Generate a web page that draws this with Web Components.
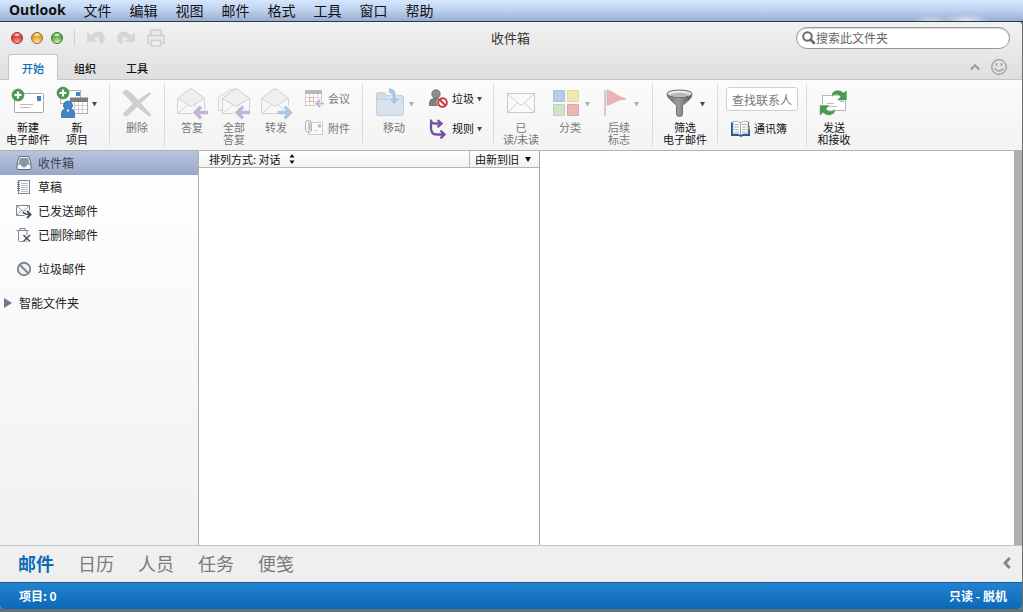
<!DOCTYPE html>
<html lang="zh-CN">
<head>
<meta charset="utf-8">
<title>Outlook</title>
<style>
  html { height: 100%; }
  body {
    margin: 0; min-height: 100vh; display: flex; flex-direction: column;
    font: 12px/16px "Noto Sans CJK SC", sans-serif; color: #1c1c1c;
    background: #66716f;
  }
  mail-window { flex: 1; }
</style>
</head>
<body>
<menu-bar>
  <menu-item strong>Outlook</menu-item>
  <menu-item>文件</menu-item><menu-item>编辑</menu-item><menu-item>视图</menu-item>
  <menu-item>邮件</menu-item><menu-item>格式</menu-item><menu-item>工具</menu-item>
  <menu-item>窗口</menu-item><menu-item>帮助</menu-item>
</menu-bar>
<mail-window>
  <title-bar slot="title">收件箱</title-bar>
  <tab-strip slot="tabs">
    <ribbon-tab selected>开始</ribbon-tab><ribbon-tab>组织</ribbon-tab><ribbon-tab>工具</ribbon-tab>
  </tab-strip>
  <ribbon-bar slot="ribbon">
    <ribbon-group style="--start:7px;--end:11px;--gap:7px">
      <ribbon-button icon="newMail">新建<br>电子邮件</ribbon-button>
      <ribbon-button icon="newItem" menu>新<br>项目</ribbon-button>
    </ribbon-group>
    <ribbon-group>
      <ribbon-button icon="remove" disabled>删除</ribbon-button>
    </ribbon-group>
    <ribbon-group style="--end:12px">
      <ribbon-button icon="reply" disabled>答复</ribbon-button>
      <ribbon-button icon="replyAll" disabled>全部<br>答复</ribbon-button>
      <ribbon-button icon="forward" disabled>转发</ribbon-button>
      <ribbon-stack style="--before:8px">
        <ribbon-button small icon="meeting" disabled>会议</ribbon-button>
        <ribbon-button small icon="attach" disabled>附件</ribbon-button>
      </ribbon-stack>
    </ribbon-group>
    <ribbon-group style="--start:10px;--end:11px">
      <ribbon-button icon="move" menu disabled>移动</ribbon-button>
      <ribbon-stack style="--before:14px">
        <ribbon-button small icon="junk" menu>垃圾</ribbon-button>
        <ribbon-button small icon="rules" menu>规则</ribbon-button>
      </ribbon-stack>
    </ribbon-group>
    <ribbon-group style="--end:12px;--gap:7px">
      <ribbon-button icon="readState" disabled>已<br>读/未读</ribbon-button>
      <ribbon-button icon="categories" menu disabled>分类</ribbon-button>
      <ribbon-button icon="flag" menu disabled>后续<br>标志</ribbon-button>
    </ribbon-group>
    <ribbon-group style="--start:11px;--end:11px">
      <ribbon-button icon="filter" menu>筛选<br>电子邮件</ribbon-button>
    </ribbon-group>
    <ribbon-group style="--start:8px;--end:8px">
      <ribbon-stack>
        <contact-finder></contact-finder>
        <ribbon-button small inset icon="addressBook">通讯簿</ribbon-button>
      </ribbon-stack>
    </ribbon-group>
    <ribbon-group last>
      <ribbon-button icon="sendReceive">发送<br>和接收</ribbon-button>
    </ribbon-group>
  </ribbon-bar>
  <folder-list slot="folders">
    <folder-item icon="inbox" selected>收件箱</folder-item>
    <folder-item icon="drafts">草稿</folder-item>
    <folder-item icon="sent">已发送邮件</folder-item>
    <folder-item icon="trash">已删除邮件</folder-item>
    <folder-item icon="blocked" apart>垃圾邮件</folder-item>
    <folder-item parent apart>智能文件夹</folder-item>
  </folder-list>
  <message-list slot="messages">
    <span slot="arrange">排列方式: 对话</span>
    <span slot="order">由新到旧</span>
  </message-list>
  <reading-pane slot="reading"></reading-pane>
  <view-switcher slot="views">
    <view-link selected>邮件</view-link><view-link>日历</view-link><view-link>人员</view-link>
    <view-link>任务</view-link><view-link>便笺</view-link>
  </view-switcher>
  <status-bar slot="status">
    <span>项目: 0</span><span slot="end">只读 - 脱机</span>
  </status-bar>
</mail-window>

<script>
const badge = (x, y) => `<circle cx="${x}" cy="${y}" r="6" fill="#4a9a50" stroke="#397f40" stroke-width=".6"/><path d="M${x-3.5} ${y}h7M${x} ${y-3.5}v7" stroke="#fff" stroke-width="2.2"/>`;
const openEnvelope = (x) => `<g transform="translate(${x} 0)" stroke="#d3d3d3" fill="#f8f8f8" stroke-linejoin="round"><path d="M1.5 10.5 13 1.6q2-1.2 4 0l11.500 8.900V25.500h-27z"/><path d="M1.500 10.500 13 1.600q2-1.200 4 0l11.500 8.900L15 18.500z" fill="#efefef"/><path d="M1.500 25.500 12 16.700M28.500 25.500 18 16.700" fill="none"/></g>`;
const arrowLeft = `<path d="M29.500 24.500H19M24.500 18.500l-6 6 6 6" fill="none" stroke="#f6f6f6" stroke-width="5.500"/><path d="M32 24.500H19.500M25 18.700l-5.800 5.800 5.800 5.800" fill="none" stroke="#c3b2d6" stroke-width="3.300"/>`;
const arrowRight = `<path d="M18 24.500h12M25 18.500l6 6-6 6" fill="none" stroke="#f6f6f6" stroke-width="5.500"/><path d="M17.500 24.500H30M24.500 18.700l5.800 5.800-5.800 5.800" fill="none" stroke="#adc5e3" stroke-width="3.300"/>`;
const ICONS = {
  newMail: [32, 32, `<rect x="2.500" y="5.500" width="29" height="19" rx=".8" fill="#fff" stroke="#a8a8a8"/><path d="M25 8h4v5h-4z" fill="#3d85c8"/><path d="M8 16.500h13M8 19.500h10" stroke="#b9b9b9"/>` + badge(6, 7)],
  newItem: [32, 32, `<rect x="3.500" y="2.500" width="20" height="13" fill="#fff" stroke="#b0b0b0"/><path d="M19 4h4v4h-4z" fill="#3d85c8"/><rect x="13.500" y="10.500" width="17" height="15" fill="#fff" stroke="#b0b0b0"/><path d="M13 9.500h18V14H13z" fill="#7c7c7c"/><path d="M17.500 14v11M21.500 14v11M25.500 14v11M14 17.500h16M14 21.500h16" stroke="#cfcfcf"/><g fill="#3f83c9" stroke="#2a66a6" stroke-width=".7"><path d="M4.500 29.500v-4q0-4.500 5-4.500h3q5 0 5 4.500v4z"/><circle cx="11" cy="17.500" r="4.500"/></g><path d="M9.500 21.500h3L11 24.500z" fill="#fff"/>` + badge(6, 5)],
  remove: [32, 32, `<path d="M2.500 3.500Q5 .8 8.500 3.800L17 12.200 28 5q2.500-.8 1 1.500l-9.500 8.700 10 11.300q.5 2.500-2 1.200L16 18.500 6.500 27.800q-4 1-4-2.300L12.300 15.800 2.600 5.600z" fill="#cfcfcf" stroke="#bdbdbd" stroke-width=".5"/>`],
  reply: [32, 32, openEnvelope(0) + arrowLeft],
  replyAll: [32, 32, `<path d="M4 22.500H.5v-13L12 1.600h5" fill="#f6f6f6" stroke="#d3d3d3"/>` + openEnvelope(3) + arrowLeft],
  forward: [32, 32, openEnvelope(0) + arrowRight],
  meeting: [20, 20, `<rect x=".5" y="1.500" width="16" height="15" fill="#fff" stroke="#ccc"/><path d="M0 1h17v4H0z" fill="#b9b9b9"/><path d="M4.500 5v11M8.500 5v11M12.500 5v11M1 8.500h15M1 12.500h15" stroke="#d8d8d8"/><path d="M4.500 8.500h4v4h-4z" fill="none" stroke="#e2aca6"/><path d="M19 14.500h-7M15 11l-3.700 3.500L15 18" fill="none" stroke="#f6f6f6" stroke-width="4"/><path d="M19 14.500h-7M15 11l-3.700 3.500L15 18" fill="none" stroke="#c3b2d6" stroke-width="2"/>`],
  attach: [20, 20, `<rect x="3.500" y="3.500" width="14" height="12" fill="#fafafa" stroke="#ccc"/><path d="M13 5.500h3v3h-3z" fill="#9fbfe0"/><path d="M9 11.500h3" stroke="#ccc"/><path d="M4.500 4.500v6q.5 1.500 1.500 0v-7Q5.500 1 3 1.200.6 1.500.5 4v7q.3 2.500 3 2.700 2.600-.2 3-2.700V5" fill="none" stroke="#b2b2b2"/>`],
  move: [32, 32, `<path d="M2.500 6.500q0-2 2-2h6l2 3h15q2 0 2 2V14h-27z" fill="#d0dde7" stroke="#c0cfda"/><path d="M2.500 11.500h27v15q0 1-1 1h-25q-1 0-1-1z" fill="#d6e3ed" stroke="#c3d1dc"/><path d="M14.500 0q8-.5 8 10h4.500l-6.700 7-6.800-7h4.500q0-5-3.500-5z" fill="#a9c5e2" stroke="#f3f6f9" stroke-width=".8"/>`],
  junk: [20, 20, `<path d="M.5 16.500V14q0-4 4-4.500h5q4 .5 4 4.500v2.500z" fill="#838383" stroke="#626262" stroke-width=".8"/><circle cx="7" cy="5" r="4.200" fill="#8f8f8f" stroke="#626262" stroke-width=".8"/><circle cx="13.500" cy="13.500" r="5.800" fill="#f5f5f5"/><circle cx="13.500" cy="13.500" r="4.300" fill="#fff" stroke="#bf3a38" stroke-width="1.900"/><path d="m10.500 10.500 6 6" stroke="#bf3a38" stroke-width="1.900"/>`],
  rules: [20, 20, `<path d="M2 .5q0 4 3.500 4H11M2 3v6q0 6.500 5.500 6.500H14" fill="none" stroke="#764fa0" stroke-width="2.300"/><path d="m8.500 1 4 3.500-4 3.700M11.500 11.500l4 4-4 3.800" fill="none" stroke="#764fa0" stroke-width="2.300"/>`],
  readState: [32, 32, `<rect x="2.500" y="5.500" width="27" height="19" fill="#fafafa" stroke="#c9c9c9"/><path d="m2.500 5.500 12 11q1.500 1 3 0l12-11M2.500 24.500l10-9.500M29.500 24.500l-10-9.500" fill="none" stroke="#cdcdcd"/>`],
  categories: [32, 32, `<g stroke-width="1"><path d="M3.500 2.500h11v11h-11z" fill="#b5cde9" stroke="#a5bfdc"/><path d="M17.500 2.500h11v11h-11z" fill="#f5e5b3" stroke="#e5d5a2"/><path d="M3.500 16.500h11v11h-11z" fill="#cfe1c9" stroke="#bdd2b6"/><path d="M17.500 16.500h11v11h-11z" fill="#ecb6b6" stroke="#dda5a5"/></g>`],
  flag: [32, 32, `<path d="M5 2h2v26H5z" fill="#cdcdcd"/><path d="M8 2q5 1 9 4.500 4 3 10 4.500-8 .5-12 3.500-3 2-7 2.500z" fill="#e9b5b5" stroke="#dfa4a4" stroke-width=".7"/>`],
  filter: [32, 32, `<defs><linearGradient id="steel"><stop stop-color="#727272"/><stop offset=".45" stop-color="#9a9a9a"/><stop offset="1" stop-color="#5d5d5d"/></linearGradient></defs><path d="M2 6q0 3 3 5.500l6.500 6V26q0 2.500 3 2.500t3-2.500v-8.500l7-6Q27 9 27 6z" fill="url(#steel)" stroke="#555" stroke-width=".7"/><ellipse cx="14.500" cy="5.700" rx="12.500" ry="3.700" fill="#e8e8e8" stroke="#666"/><path d="M3.500 7q11-4.500 22 0-11 4-22 0z" fill="#b9b9b9"/>`],
  addressBook: [20, 20, `<path d="M0 3.500h19V17h-7l-2 1-2-1H0z" fill="#1f5a94"/><path d="M18 4h1.500v3H18z" fill="#fff"/><path d="M17.500 7.500H19v3h-1.500z" fill="#e8b730"/><path d="M2 2.500q5-1 7.500 1.200V16Q7 14 2 15zM17 2.500q-5-1-7.500 1.200V16q2.500-2 7.500-1z" fill="#fff" stroke="#929ba3" stroke-width=".7"/><path d="M3.500 5.500H8M3.500 8H8M3.500 10.500H8M3.500 13H8M11 5.500h4.500M11 8h4.500M11 10.500h4.500M11 13h4.500" stroke="#a9a9a9" stroke-width=".9"/>`],
  sendReceive: [32, 32, `<rect x="4.500" y="7.500" width="23" height="15" fill="#fff" stroke="#b5b5b5"/><path d="M22 10h4v4h-4z" fill="#8eb9df"/><path d="M9 15.500h7M9 18.500h10" stroke="#bdbdbd"/><path d="M13.500 6.500q1-4 6-4.500 4 0 6 2.500L29 2v10.500H18.500l3.800-3.700q-1.500-2-4-2-2.500 0-4.300 2.200zM17.500 23q-1.500 4-6 4.500-4 .2-6.200-2.500L1.500 28V17H12l-3.500 4q1.500 2 4 2 2 0 4-2z" fill="#4b9a4c" stroke="#fff" stroke-width=".6"/>`],
  inbox: [16, 16, `<path d="M3 1.500h10l2 7v5q0 1-1 1H2q-1 0-1-1v-5z" fill="#f4f6fa" stroke="#5f6c80"/><path d="M4 3h8l1.500 5.500h-2.600q-.9 3-2.900 3t-2.900-3H2.500z" fill="#8b94a5"/><path d="M1 9h4q1 3 3 3t3-3h4" fill="none" stroke="#6e7a8d"/>`],
  drafts: [16, 16, `<rect x="2.500" y="1.500" width="11" height="13" fill="#fafbfc" stroke="#7d8794"/><path d="M5 4.500h7M5 6.500h7M5 8.500h7M5 10.500h7M5 12.500h7" stroke="#aab1ba" stroke-width=".8"/><path d="M1 3.500h3M1 5.500h3M1 7.500h3M1 9.500h3M1 11.500h3" stroke="#5f6975" stroke-width=".8"/>`],
  sent: [16, 16, `<path d="M.500 2.500h13v10H.5z" fill="#fff" stroke="#7d8794"/><path d="M.5 2.500 7 8.500l6.500-6M.5 12.500l4.700-5M13.500 12.500 9 7.500" fill="none" stroke="#8a939f"/><path d="M7 9q1 2.500 7 2.500M11 7.500l4 4-4 3.500" fill="none" stroke="#fff" stroke-width="3.500"/><path d="M7 9q1 2.500 7 2.500M11 7.800l3.700 3.700-3.700 3.500" fill="none" stroke="#47505c" stroke-width="1.800"/>`],
  trash: [16, 16, `<path d="M2.500 4v9.500q0 1 1 1H11V4" fill="#fbfbfb" stroke="#858d98"/><path d="M.500 3.500h12M4 3V1.500h5V3" fill="none" stroke="#858d98" stroke-width="1.200"/><path d="m7.500 8 6.500 6.500M14 8l-6.500 6.500" stroke="#fff" stroke-width="3.200"/><path d="m7.500 8 6.500 6.500M14 8l-6.500 6.500" stroke="#4d5661" stroke-width="1.700"/>`],
  blocked: [16, 16, `<circle cx="8" cy="8" r="6.200" fill="#f3f3f3" stroke="#7f8792" stroke-width="1.900"/><path d="m3.500 3.500 9 9" stroke="#7f8792" stroke-width="2"/>`],
  undo: [18, 16, `<path d="M0 2v10h10.500L7 8.700q2-2.200 4-1.500 2.700 1.300.8 4.300l2.500 3q3.700-3 3.500-7Q16.500 2 12 1.500 7.500 1.500 4 5.500z" fill="#d6d6d6"/>`],
  redo: [18, 16, `<path d="M18 2v10H7.500L11 8.700q-2-2.200-4-1.500-2.700 1.300-.8 4.300l-2.500 3Q0 11.500.2 7.500 1.500 2 6 1.500q4.500 0 8 4z" fill="#d6d6d6"/>`],
  print: [18, 18, `<g fill="#e9e9e9" stroke="#cfcfcf" stroke-width="1.400"><path d="M4 6V1h10v5"/><path d="M1 6.500h16v8H1z"/><path d="M4.500 11.500h9V17h-9z" fill="#f2f2f2"/></g>`],
  search: [14, 16, `<circle cx="5.500" cy="6.500" r="4.300" fill="none" stroke="#6a6a6a" stroke-width="2"/><path d="m8.500 9.500 3.500 3.500" stroke="#6a6a6a" stroke-width="2.500" stroke-linecap="round"/>`],
  collapse: [10, 8, `<path d="m.8 6.500 4.200-4.200 4.200 4.200" fill="none" stroke="#9d9d9d" stroke-width="2.200"/>`],
  smile: [18, 18, `<circle cx="9" cy="9" r="7.300" fill="none" stroke="#9d9d9d" stroke-width="1.300"/><path d="M6.500 5v3M11.500 5v3" stroke="#9d9d9d" stroke-width="1.500"/><path d="M4.500 10.500q4.500 5 9 0" fill="none" stroke="#9d9d9d" stroke-width="1.300"/>`],
  back: [8, 12, `<path d="M6.700 1 2 6l4.700 5" fill="none" stroke="#858585" stroke-width="2.800"/>`],
  down: [5, 5, `<path d="M0 0h5L2.500 4.500z" fill="currentColor"/>`],
  sortDown: [6, 5, `<path d="M0 0h6L3 5z" fill="currentColor"/>`],
  updown: [6, 10, `<path d="M.5 3.500h5L3 0zM.5 6.500h5L3 10z" fill="currentColor"/>`],
  right: [8, 10, `<path d="M0 0v10l8-5z" fill="#6b7a93"/>`]
};

const RESET = `
  button, a, input { font: inherit; color: inherit; line-height: inherit; }
  button { margin: 0; padding: 0; border: 0; background: none; cursor: default; text-align: inherit; }
  a { text-decoration: none; cursor: default; }`;

/** Registers an element whose shadow root is cloned from a template built from css and html. */
function define(name, css, html) {
  customElements.define(name, class extends HTMLElement {
    constructor() {
      super();
      this.attachShadow({ mode: 'open' });
    }
    connectedCallback() {
      if (this.shadowRoot.childNodes.length) return;
      const t = document.createElement('template');
      t.innerHTML = `<style>${RESET}${css}</style>${typeof html === 'function' ? html(this) : html}`;
      this.shadowRoot.append(t.content.cloneNode(true));
    }
  });
}

define('ui-icon', `:host { display: block; flex: none; } svg { display: block; overflow: visible; }`, el => {
  const [w, h, body] = ICONS[el.getAttribute('name')];
  return `<svg width="${w}" height="${h}" viewBox="0 0 ${w} ${h}" aria-hidden="true">${body}</svg>`;
});

define('menu-bar', `
  :host { display: block; border-bottom: 1px solid #26395c;
    background: radial-gradient(ellipse 24px 7px at calc(100% - 57px) 100%, #eef3f8cc, transparent), radial-gradient(ellipse 18px 6px at calc(100% - 92px) 100%, #e4ebf3aa, transparent), linear-gradient(#d6e6fc, #bed4f2 45%, #9cadca); }
  nav { box-sizing: border-box; display: flex; gap: 18px; padding: 0 9px 2px; height: 21px; align-items: center; }`,
  `<nav aria-label="菜单"><slot></slot></nav>`);

define('menu-item', `
  :host { display: block; font-size: 14px; line-height: 20px; color: #111; }
  :host([strong]) { font-family: "Noto Sans", sans-serif; font-weight: 700; }
  button { display: block; white-space: nowrap; }`,
  `<button type="button"><slot></slot></button>`);

define('mail-window', `
  :host { display: flex; flex-direction: column; margin: 0 1px 3px 0; background: #fff; border-radius: 0 4px 4px 4px; overflow: hidden; }
  header { background: linear-gradient(#f2f2f2, #dedede); }
  main { flex: 1; display: grid; grid-template-columns: 199px 341px 1fr; }`,
  `<header><slot name="title"></slot><slot name="tabs"></slot></header>
   <slot name="ribbon"></slot>
   <main><slot name="folders"></slot><slot name="messages"></slot><slot name="reading"></slot></main>
   <slot name="views"></slot><slot name="status"></slot>`);

define('title-bar', `
  :host { display: grid; grid-template-columns: 1fr auto 1fr; align-items: center; height: 32px; padding: 0 12px 0 11px; }
  h1 { margin: 0; font-size: 13px; line-height: 18px; font-weight: 400; color: #333; }
  .left { display: flex; align-items: center; }
  .lights { display: flex; gap: 8px; padding-right: 11px; margin-right: 12px; border-right: 1px solid #cfcfcf; height: 16px; align-items: center; }
  .lights button { width: 12px; height: 12px; border-radius: 50%; border: 1px solid var(--edge); background: radial-gradient(ellipse 4px 2px at 50% 18%, #fff, transparent), radial-gradient(circle at 50% 95%, var(--glow), var(--fill) 60%); }
  .tools { display: flex; gap: 12px; align-items: center; }
  .tools button { display: block; }
  .search { justify-self: end; box-sizing: border-box; width: 214px; height: 22px; display: flex; align-items: center; padding: 0 5px; background: #fff; border: 1px solid #989898; border-radius: 11px; box-shadow: inset 0 1px 1px #00000026; }
  input { flex: 1; min-width: 0; padding: 0; border: 0; outline: 0; background: none; line-height: 18px; }
  input::placeholder { color: #666; opacity: 1; }`,
  `<div class="left">
     <div class="lights">
       <button type="button" aria-label="关闭" style="--edge:#96302f;--fill:#dc3d3d;--glow:#ffa59c"></button>
       <button type="button" aria-label="最小化" style="--edge:#9c6c28;--fill:#e69b2c;--glow:#ffee9e"></button>
       <button type="button" aria-label="缩放" style="--edge:#437336;--fill:#5fa84c;--glow:#d3f5b4"></button>
     </div>
     <div class="tools">
       <button type="button" aria-label="撤消" disabled><ui-icon name="undo"></ui-icon></button>
       <button type="button" aria-label="重做" disabled><ui-icon name="redo"></ui-icon></button>
       <button type="button" aria-label="打印" disabled><ui-icon name="print"></ui-icon></button>
     </div>
   </div>
   <h1><slot></slot></h1>
   <label class="search"><ui-icon name="search"></ui-icon><input type="search" aria-label="搜索" placeholder="搜索此文件夹"></label>`);

define('tab-strip', `
  :host { display: flex; justify-content: space-between; height: 25px; padding: 0 14px 0 8px; border-bottom: 1px solid #c6c6c6; }
  div { display: flex; gap: 2px; margin-bottom: -1px; }
  .extra { align-items: center; gap: 10px; }`,
  `<div role="tablist"><slot></slot></div>
   <div class="extra"><button type="button" aria-label="折叠功能区"><ui-icon name="collapse"></ui-icon></button>
   <button type="button" aria-label="反馈"><ui-icon name="smile"></ui-icon></button></div>`);

define('ribbon-tab', `
  :host { display: block; font-size: 11px; line-height: 16px; font-weight: 500; color: #111; }
  button { box-sizing: border-box; width: 50px; height: 26px; text-align: center; border: 1px solid transparent; border-bottom: 0; border-radius: 3px 3px 0 0; }
  :host([selected]) button { background: #fcfcfc; border-color: #c6c6c6; color: #0f6cb4; }`,
  el => `<button type="button" role="tab" aria-selected="${el.hasAttribute('selected')}"><slot></slot></button>`);

define('ribbon-bar', `
  :host { display: flex; height: 70px; background: linear-gradient(#fbfbfb, #f3f3f3); border-bottom: 1px solid #b4b4b4; }`,
  `<slot></slot>`);

define('ribbon-group', `
  :host { display: flex; gap: var(--gap, 0); margin: 4px 0; padding: 0 var(--end, 6px) 0 var(--start, 6px); border-right: 1px solid #dcdcdc; }
  :host([last]) { border: 0; }`, `<slot></slot>`);

define('ribbon-stack', `
  :host { display: flex; flex-direction: column; gap: 10px; padding: 5px 0 0 var(--before, 0); }`, `<slot></slot>`);

define('ribbon-button', `
  :host { display: block; font-family: "Liberation Sans", "Noto Sans CJK SC", sans-serif; font-size: 11px; line-height: 12px; color: #111; --arrow: #4a4a4a; }
  :host([disabled]) { color: #777; --arrow: #b0b0b0; }
  :host([inset]) { padding-left: 5px; }
  button { display: flex; flex-direction: column; align-items: center; width: 42px; padding-top: 4px; gap: 2px; }
  .face { display: flex; align-items: center; gap: 3px; }
  .text { text-align: center; white-space: nowrap; }
  .arrow { color: var(--arrow); }
  :host([small]) button { flex-direction: row; width: auto; height: 20px; padding: 0; gap: 3px; }`,
  el => {
    const arrow = el.hasAttribute('menu') ? '<ui-icon class="arrow" name="down"></ui-icon>' : '';
    const icon = `<ui-icon name="${el.getAttribute('icon')}"></ui-icon>`;
    const off = el.hasAttribute('disabled') ? 'disabled' : '';
    return el.hasAttribute('small')
      ? `<button type="button" ${off}>${icon}<span class="text"><slot></slot></span>${arrow}</button>`
      : `<button type="button" ${off}><span class="face">${icon}${arrow}</span><span class="text"><slot></slot></span></button>`;
  });

define('contact-finder', `
  :host { display: block; height: 20px; }
  input { box-sizing: border-box; display: block; width: 72px; height: 24px; margin-top: -2px; padding: 0 5px; border: 1px solid #d0d0d0; border-radius: 3px; background: #fff; outline: 0; }
  input::placeholder { color: #777; opacity: 1; }`,
  `<input type="text" aria-label="查找联系人" placeholder="查找联系人">`);

define('folder-list', `
  :host { display: block; border-right: 1px solid #b0b0b0; background: linear-gradient(#fff, #f1f1f1); }
  nav { display: flex; flex-direction: column; }`,
  `<nav aria-label="文件夹"><slot></slot></nav>`);

define('folder-item', `
  :host { display: block; color: #222; }
  :host([apart]) { margin-top: 10px; }
  a { display: flex; align-items: center; gap: 6px; height: 24px; padding-left: 16px; }
  :host([selected]) a { background: linear-gradient(#b9c4de, #98a7c7); color: #3b4252; }
  :host([parent]) a { padding-left: 4px; gap: 7px; }`,
  el => `<a href="#"><ui-icon name="${el.getAttribute('icon') || 'right'}"></ui-icon><span><slot></slot></span></a>`);

define('message-list', `
  :host { display: block; background: #fff; border-right: 1px solid #a6a6a6; font-size: 11px; line-height: 16px; color: #111; }
  div { display: flex; justify-content: space-between; background: linear-gradient(#fff, #f1f1f1); border-bottom: 1px solid #b5b5b5; height: 16px; }
  button { display: flex; align-items: center; gap: 8px; padding: 0 8px 0 10px; }
  .order { gap: 6px; padding: 0 8px 0 5px; border-left: 1px solid #b5b5b5; }`,
  `<div><button type="button"><slot name="arrange"></slot><ui-icon name="updown"></ui-icon></button>
   <button type="button" class="order"><slot name="order"></slot><ui-icon name="sortDown"></ui-icon></button></div>`);

define('reading-pane', `:host { display: block; background: #fff; border-right: 8px solid #aeaeae; }`, ``);

define('view-switcher', `
  :host { display: flex; align-items: center; justify-content: space-between; height: 34px; padding: 0 11px 2px 18px; border-top: 1px solid #c3c3c3; background: #efefef; }
  nav { display: flex; gap: 24px; }`,
  `<nav aria-label="视图"><slot></slot></nav><button type="button" aria-label="展开"><ui-icon name="back"></ui-icon></button>`);

define('view-link', `
  :host { display: block; font-size: 18px; line-height: 24px; color: #7b7b7b; }
  :host([selected]) { color: #0f6cb4; font-weight: 700; }`,
  `<a href="#"><slot></slot></a>`);

define('status-bar', `
  :host { display: flex; align-items: center; justify-content: space-between; height: 26px; padding: 0 15px 0 19px; border-top: 1px solid #0d5ca3; background: linear-gradient(#2482cf, #0a68b8); color: #fff; font-size: 12px; line-height: 16px; font-weight: 700; }`,
  `<slot></slot><slot name="end"></slot>`);
</script>
</body>
</html>
